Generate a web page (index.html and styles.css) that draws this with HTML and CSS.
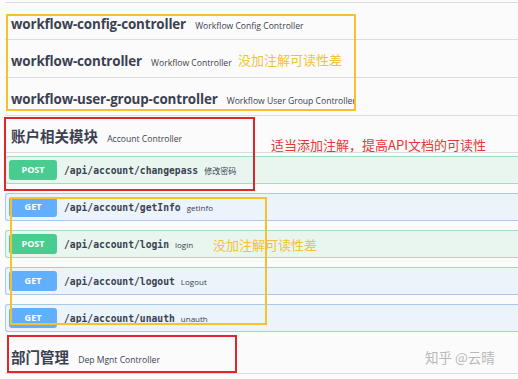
FILE: index.html
```html
<!DOCTYPE html>
<html lang="zh-CN">
<head>
  <meta charset="UTF-8">
  <title>Swagger API 注解</title>
  <link rel="stylesheet" href="styles.css">
</head>
<body>

  <div class="page">
    <div class="tag first">
      <span class="tag-name">workflow-config-controller</span>
      <small>Workflow Config Controller</small>
    </div>
    <div class="tag">
      <span class="tag-name">workflow-controller</span>
      <small>Workflow Controller</small>
    </div>
    <div class="tag">
      <span class="tag-name">workflow-user-group-controller</span>
      <small>Workflow User Group Controller</small>
    </div>

    <div class="tag account">
      <span class="tag-name cn">账户相关模块</span>
      <small>Account Controller</small>
    </div>
    <div class="ops">
      <div class="op post">
        <span class="method">POST</span>
        <span class="path">/api/account/changepass</span>
        <span class="summary">修改密码</span>
      </div>
      <div class="op get">
        <span class="method">GET</span>
        <span class="path">/api/account/getInfo</span>
        <span class="summary">getInfo</span>
      </div>
      <div class="op post">
        <span class="method">POST</span>
        <span class="path">/api/account/login</span>
        <span class="summary">login</span>
      </div>
      <div class="op get">
        <span class="method">GET</span>
        <span class="path">/api/account/logout</span>
        <span class="summary">Logout</span>
      </div>
      <div class="op get">
        <span class="method">GET</span>
        <span class="path">/api/account/unauth</span>
        <span class="summary">unauth</span>
      </div>
    </div>

    <div class="tag dept">
      <span class="tag-name cn">部门管理</span>
      <small>Dep Mgnt Controller</small>
    </div>

    <!-- annotations drawn over the screenshot -->
    <div class="mark yellow mark-workflow"></div>
    <div class="note yellow-text note-workflow">没加注解可读性差</div>
    <div class="mark red mark-account"></div>
    <div class="note red-text note-account">适当添加注解，提高API文档的可读性</div>
    <div class="mark yellow mark-ops"></div>
    <div class="note yellow-text note-ops">没加注解可读性差</div>
    <div class="mark red mark-dept"></div>
    <div class="watermark">知乎 @云晴</div>
  </div>

</body>
</html>
```

FILE: styles.css
```css
body {
  margin: 0;
  background: #fbfbfb;
  font-family: 'Open Sans', 'Noto Sans CJK SC', sans-serif;
  color: #3b4151;
  overflow: hidden;
}

.page {
  position: relative;
  width: 518px;
  height: 379px;
  padding-left: 5px;
  box-sizing: border-box;
  overflow: hidden;
}

.tag {
  box-sizing: border-box;
  height: 38px;
  padding: 10px 0 0 6px;
  line-height: 20px;
  border-bottom: 1px solid #dcdcdc;
  white-space: nowrap;
}

.tag.first {
  border-top: 1px solid #dcdcdc;
  margin-top: 2px;
}

.tag.account {
  height: 37px;
}

.tag.dept {
  height: 42px;
  padding-top: 15px;
}

.tag-name {
  font-size: 13.4px;
  font-weight: 700;
  letter-spacing: -0.15px;
}

.tag-name.cn {
  font-family: 'Noto Sans CJK SC', sans-serif;
  font-size: 14.5px;
  letter-spacing: 0;
}

.tag small {
  font-size: 8.6px;
  margin-left: 5px;
  color: #3b4151;
}

.ops {
  margin-top: 3px;
}

.op {
  box-sizing: border-box;
  height: 28px;
  margin-bottom: 9px;
  display: flex;
  align-items: center;
  border: 1px solid;
  border-right: none;
  border-radius: 3px 0 0 3px;
  white-space: nowrap;
}

.op:last-child {
  margin-bottom: 0;
}

.op.get {
  background: #ebf3fb;
  border-color: #a9c9ea;
}

.op.post {
  background: #e8f6ef;
  border-color: #a4dbc1;
}

.method {
  width: 48px;
  height: 20px;
  margin-left: 3px;
  border-radius: 3px;
  color: #fff;
  font-size: 9px;
  font-weight: 700;
  line-height: 20px;
  text-align: center;
}

.get .method {
  background: #61affe;
}

.post .method {
  background: #49cc90;
}

.path {
  margin-left: 7px;
  font-family: 'DejaVu Sans Mono', monospace;
  font-size: 9.7px;
  font-weight: 700;
  color: #3b4151;
}

.summary {
  margin-left: 6px;
  font-size: 8px;
  color: #3b4151;
}

/* overlays */
.mark {
  position: absolute;
  box-sizing: border-box;
  border: 2px solid;
}

.mark.yellow {
  border-color: #f5c22e;
}

.mark.red {
  border-color: #e0262b;
}

.mark-workflow {
  left: 6px;
  top: 14px;
  width: 350px;
  height: 97px;
}

.mark-account {
  left: 4px;
  top: 117px;
  width: 251px;
  height: 74px;
}

.mark-ops {
  left: 10px;
  top: 197px;
  width: 257px;
  height: 128px;
}

.mark-dept {
  left: 7px;
  top: 335px;
  width: 230px;
  height: 38px;
}

.note {
  position: absolute;
  font-family: 'Noto Sans CJK SC', sans-serif;
  font-size: 13px;
  line-height: 16px;
  white-space: nowrap;
}

.yellow-text {
  color: #f2c236;
}

.red-text {
  color: #e53935;
}

.note-workflow {
  left: 238px;
  top: 52px;
}

.note-account {
  left: 271px;
  top: 137px;
}

.note-ops {
  left: 213px;
  top: 237px;
}

.watermark {
  position: absolute;
  left: 425px;
  top: 347px;
  font-family: 'Noto Sans CJK SC', sans-serif;
  font-size: 13.5px;
  color: #b8b8b8;
  white-space: nowrap;
}
```
